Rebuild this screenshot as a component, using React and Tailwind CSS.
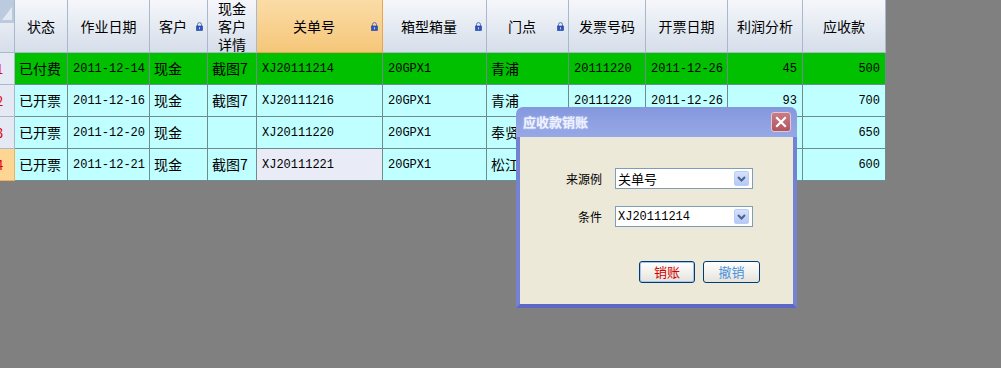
import React from 'react';

const COLS = '15px 53px 82px 58px 49px 126px 104px 82px 77px 82px 75px 83px';

const HEADERS = [
  { label: '状态' },
  { label: '作业日期' },
  { label: '客户', lock: true },
  { label: '现金客户详情', wrap: true },
  { label: '关单号', lock: true, active: true },
  { label: '箱型箱量', lock: true },
  { label: '门点', lock: true },
  { label: '发票号码' },
  { label: '开票日期' },
  { label: '利润分析' },
  { label: '应收款' },
];

const ROWS = [
  ['已付费', '2011-12-14', '现金', '截图7', 'XJ20111214', '20GPX1', '青浦', '20111220', '2011-12-26', '45', '500'],
  ['已开票', '2011-12-16', '现金', '截图7', 'XJ20111216', '20GPX1', '青浦', '20111220', '2011-12-26', '93', '700'],
  ['已开票', '2011-12-20', '现金', '', 'XJ20111220', '20GPX1', '奉贤', '20111220', '2011-12-26', '61', '650'],
  ['已开票', '2011-12-21', '现金', '截图7', 'XJ20111221', '20GPX1', '松江', '20111220', '2011-12-26', '58', '600'],
];

const cjk = { fontFamily: '"Noto Sans CJK SC", "Liberation Sans", sans-serif' };
const mono = { fontFamily: '"Liberation Mono", "Noto Sans CJK SC", monospace' };

function Lock() {
  return (
    <svg width="7" height="9" viewBox="0 0 7 9">
      <path d="M1.5 4 V2.6 A2 2 0 0 1 5.5 2.6 V4" fill="none" stroke="#5670b8" strokeWidth="1" />
      <rect x="0.5" y="4" width="6" height="4.5" fill="#2f55c4" stroke="#1e3c96" strokeWidth="0.6" />
      <rect x="3" y="5.3" width="1" height="2" fill="#c8d4f4" />
    </svg>
  );
}

function HeaderCell({ h }) {
  const bg = h.active
    ? 'bg-gradient-to-b from-[#fbdca6] to-[#f5c678] border-[#eea24a]'
    : 'bg-gradient-to-b from-[#f5f7fb] to-[#d6deea] border-[#aab8cc]';
  return (
    <div className={`flex h-[53px] items-center border-r border-b text-[14px] text-black ${bg}`} style={cjk}>
      <div className="flex flex-1 justify-center text-center leading-[18px]">
        {h.wrap ? (
          <span>现金<br />客户<br />详情</span>
        ) : (
          <span>{h.label}</span>
        )}
      </div>
      {h.lock && (
        <div className="flex w-[11px] items-center">
          <Lock />
        </div>
      )}
    </div>
  );
}

function BodyCell({ text, col, green, selected }) {
  const isLatin = /^[\x00-\x7F]*$/.test(text);
  const numeric = col >= 9;
  let bg = green ? 'bg-[#00c000]' : 'bg-[#c0ffff]';
  if (selected) bg = 'bg-[#e9ebf6]';
  return (
    <div
      className={`flex h-[32px] items-center overflow-hidden border-r border-b border-[#6f8c8c] ${bg} ${
        numeric ? 'justify-end pr-[5px]' : isLatin ? 'pl-[5px]' : 'pl-[4px]'
      } text-black`}
      style={isLatin ? mono : cjk}
    >
      <span className={isLatin ? 'text-[12px]' : 'text-[14px]'}>{text}</span>
    </div>
  );
}

function DropBox({ value, latin }) {
  return (
    <div className="flex h-[21px] w-[138px] items-center border border-[#7f9db9] bg-white pl-[2px] pr-[3px]">
      <span className={`flex-1 text-black ${latin ? 'text-[12px]' : 'text-[13px]'}`} style={latin ? mono : cjk}>
        {value}
      </span>
      <div className="flex h-[15px] w-[15px] items-center justify-center rounded-[2px] border border-[#b9cdf7] bg-gradient-to-b from-[#d6e2fd] to-[#b5c8f7]">
        <svg width="9" height="6" viewBox="0 0 9 6">
          <path d="M1 1 L4.5 4.5 L8 1" fill="none" stroke="#4d6185" strokeWidth="2" />
        </svg>
      </div>
    </div>
  );
}

function Dialog() {
  return (
    <div className="absolute left-[516px] top-[107px] flex h-[201px] w-[281px] flex-col">
      <div className="flex h-[30px] items-center justify-between rounded-t-[7px] bg-gradient-to-b from-[#8598de] to-[#97a8e6] pl-[7px] pr-[6px]">
        <span
          className="text-[13px] font-bold text-[#eef2ff]"
          style={{ ...cjk, textShadow: '0 0 2px #c9d3f7' }}
        >
          应收款销账
        </span>
        <div className="flex h-[20px] w-[20px] items-center justify-center rounded-[3px] border border-[#e8c6cc] bg-gradient-to-b from-[#c97c85] to-[#b0545f]">
          <svg width="12" height="12" viewBox="0 0 12 12">
            <path d="M2 2 L10 10 M10 2 L2 10" stroke="white" strokeWidth="2.2" strokeLinecap="square" />
          </svg>
        </div>
      </div>
      <div className="flex flex-1 flex-col border-x-4 border-b-4 border-x-[#7482d4] border-b-[#5d68c6] bg-[#ece9d8]">
        <div className="flex flex-col gap-[17px] pt-[31px]">
          <div className="flex items-center">
            <span className="w-[82px] text-right text-[12px] text-black" style={cjk}>来源例</span>
            <div className="ml-[13px]">
              <DropBox value="关单号" />
            </div>
          </div>
          <div className="flex items-center">
            <span className="w-[82px] text-right text-[12px] text-black" style={cjk}>条件</span>
            <div className="ml-[13px]">
              <DropBox value="XJ20111214" latin />
            </div>
          </div>
        </div>
        <div className="mt-[34px] flex gap-[8px] pl-[119px]">
          <button className="flex h-[22px] w-[56px] items-center justify-center rounded-[3px] border border-[#003c74] bg-gradient-to-b from-[#ffffff] to-[#e4e3dc] text-[13px] text-[#d40000] shadow-[inset_0_0_0_1px_#a9c3ee]" style={cjk}>
            销账
          </button>
          <button className="flex h-[22px] w-[57px] items-center justify-center rounded-[3px] border border-[#003c74] bg-gradient-to-b from-[#ffffff] to-[#e4e3dc] text-[13px] text-[#4d92db]" style={cjk}>
            撤销
          </button>
        </div>
      </div>
    </div>
  );
}

export default function App() {
  return (
    <div className="relative h-[368px] w-[1001px] overflow-hidden bg-[#808080]">
      <div className="grid w-[886px]" style={{ gridTemplateColumns: COLS }}>
        {/* corner */}
        <div className="flex h-[53px] flex-col border-r border-b border-[#aab8cc] bg-gradient-to-b from-[#f5f7fb] to-[#d6deea]">
          <div className="h-[23px] bg-[#bccadf]">
            <svg width="14" height="23" viewBox="0 0 14 23">
              <polygon points="2,20 12,7 12,20" fill="#e3e9f3" />
            </svg>
          </div>
        </div>
        {HEADERS.map((h) => (
          <HeaderCell key={h.label} h={h} />
        ))}

        {ROWS.map((row, ri) => (
          <React.Fragment key={ri}>
            <div
              className={`flex h-[32px] items-center overflow-hidden border-r border-b text-[13px] text-[#e00000] ${
                ri === 3 ? 'bg-[#ffd594] border-[#eeb05a]' : 'bg-[#e4e9f4] border-[#aab8cc]'
              }`}
              style={cjk}
            >
              <span className="-ml-[4px]">{ri + 1}</span>
            </div>
            {row.map((cell, ci) => (
              <BodyCell
                key={ci}
                text={cell}
                col={ci}
                green={ri === 0}
                selected={ri === 3 && ci === 4}
              />
            ))}
          </React.Fragment>
        ))}
      </div>
      <Dialog />
    </div>
  );
}
